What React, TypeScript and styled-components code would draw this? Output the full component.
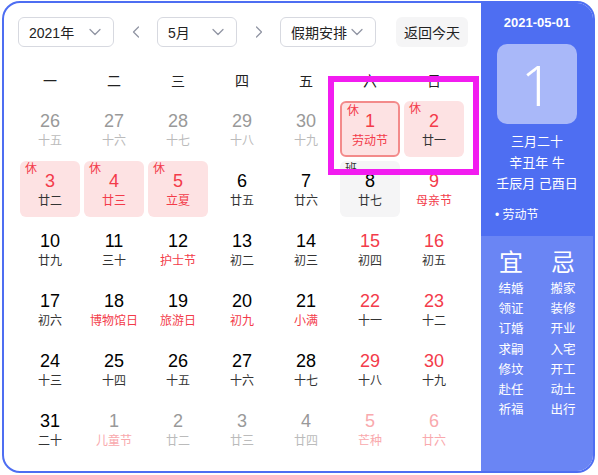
import React from "react";
import styled, { createGlobalStyle } from "styled-components";
import { ChevronDown, ChevronLeft, ChevronRight } from "lucide-react";

const GlobalStyle = createGlobalStyle`
  html, body {
    margin: 0;
    padding: 0;
    background: #fff;
  }
  body {
    font-family: "Liberation Sans", "Noto Sans CJK SC", sans-serif;
  }
`;

const Page = styled.div`
  position: relative;
  width: 598px;
  height: 475px;
  padding: 1px 0 0 2px;
  box-sizing: border-box;
`;

const Frame = styled.div`
  width: 593px;
  height: 472px;
  box-sizing: border-box;
  border: 2px solid #4e6ef2;
  border-radius: 18px;
  overflow: hidden;
  display: flex;
  background: #fff;
`;

const Main = styled.div`
  width: 477px;
  padding: 14px 0 0 14px;
  box-sizing: border-box;
  display: flex;
  flex-direction: column;
`;

const Toolbar = styled.div`
  display: flex;
  align-items: center;
  height: 30px;
`;

const Select = styled.div<{ $w: number }>`
  width: ${({ $w }) => $w}px;
  height: 30px;
  box-sizing: border-box;
  border: 1px solid #d7d9e0;
  border-radius: 6px;
  display: flex;
  align-items: center;
  justify-content: space-between;
  padding: 0 8px 0 10px;
  font-size: 14px;
  color: #222;
  font-family: "Liberation Sans", "Noto Sans CJK SC", sans-serif;
  svg {
    color: #9195a3;
  }
`;

const Arrow = styled.div`
  width: 43px;
  display: flex;
  justify-content: center;
  color: #9195a3;
`;

const TodayButton = styled.div`
  margin-left: 20px;
  height: 30px;
  padding: 0 8px;
  border-radius: 6px;
  background: #f5f5f6;
  display: flex;
  align-items: center;
  font-size: 14px;
  color: #222;
`;

const Grid = styled.div`
  margin: 18px 0 0 2px;
  display: grid;
  grid-template-columns: repeat(7, 60px);
  column-gap: 4px;
  row-gap: 4px;
`;

const WeekDay = styled.div`
  height: 30px;
  display: flex;
  align-items: center;
  justify-content: center;
  font-size: 14px;
  color: #222;
  margin-bottom: 2px;
`;

const Cell = styled.div<{ $bg?: string; $border?: boolean }>`
  position: relative;
  height: 56px;
  box-sizing: border-box;
  border-radius: 6px;
  background: ${({ $bg }) => $bg || "transparent"};
  border: ${({ $border }) => ($border ? "2px solid #f38a8a" : "none")};
  display: flex;
  flex-direction: column;
  align-items: center;
  padding-top: ${({ $border }) => ($border ? "7px" : "9px")};
`;

const DayNum = styled.div<{ $c: string }>`
  font-size: 18px;
  line-height: 22px;
  color: ${({ $c }) => $c};
`;

const Lunar = styled.div<{ $c: string }>`
  font-size: 12px;
  line-height: 16px;
  margin-top: 1px;
  color: ${({ $c }) => $c};
`;

const Tag = styled.span<{ $c: string }>`
  position: absolute;
  left: 5px;
  top: 1px;
  font-size: 12px;
  line-height: 14px;
  color: ${({ $c }) => $c};
`;

const Side = styled.div`
  flex: 1;
  display: flex;
  flex-direction: column;
  color: #fff;
`;

const SideTop = styled.div`
  background: #4e6ef2;
  display: flex;
  flex-direction: column;
  align-items: center;
  padding: 12px 0 13px;
`;

const DateLine = styled.div`
  font-size: 13px;
  font-weight: bold;
  line-height: 16px;
`;

const BigDay = styled.div`
  margin-top: 13px;
  width: 80px;
  height: 80px;
  border-radius: 10px;
  background: #a9b8f9;
  display: flex;
  align-items: center;
  justify-content: center;
  font-size: 56px;
  font-weight: 300;
  font-family: "Noto Sans", "Liberation Sans", sans-serif;
`;

const LunarLines = styled.div`
  margin-top: 7px;
  text-align: center;
  font-size: 13px;
  line-height: 21px;
`;

const Festival = styled.div`
  align-self: flex-start;
  margin: 13px 0 0 14px;
  font-size: 12px;
  line-height: 16px;
`;

const SideBottom = styled.div`
  flex: 1;
  background: #6a85f4;
  display: flex;
  justify-content: space-around;
  padding: 12px 4px 0;
`;

const YiJiCol = styled.div`
  display: flex;
  flex-direction: column;
  align-items: center;
`;

const YiJiHead = styled.div`
  font-size: 24px;
  line-height: 30px;
  margin-bottom: 1px;
`;

const YiJiItem = styled.div`
  font-size: 12.5px;
  line-height: 20.2px;
`;

const Highlight = styled.div`
  position: absolute;
  left: 328px;
  top: 76px;
  width: 151px;
  height: 99px;
  box-sizing: border-box;
  border: 6px solid #f21cf0;
  pointer-events: none;
`;

const BLACK = "#000";
const DARK = "#333";
const RED = "#f33b4a";
const GREY = "#999";
const LGREY = "#bbb";
const PINK = "#f9a9ad";

type Day = {
  n: number;
  l: string;
  nc?: string;
  lc?: string;
  tag?: "休" | "班";
  sel?: boolean;
};

const days: Day[] = [
  { n: 26, l: "十五", nc: GREY, lc: LGREY },
  { n: 27, l: "十六", nc: GREY, lc: LGREY },
  { n: 28, l: "十七", nc: GREY, lc: LGREY },
  { n: 29, l: "十八", nc: GREY, lc: LGREY },
  { n: 30, l: "十九", nc: GREY, lc: LGREY },
  { n: 1, l: "劳动节", nc: RED, lc: RED, tag: "休", sel: true },
  { n: 2, l: "廿一", nc: RED, tag: "休" },
  { n: 3, l: "廿二", nc: RED, tag: "休" },
  { n: 4, l: "廿三", nc: RED, lc: RED, tag: "休" },
  { n: 5, l: "立夏", nc: RED, lc: RED, tag: "休" },
  { n: 6, l: "廿五" },
  { n: 7, l: "廿六" },
  { n: 8, l: "廿七", tag: "班" },
  { n: 9, l: "母亲节", nc: RED, lc: RED },
  { n: 10, l: "廿九" },
  { n: 11, l: "三十" },
  { n: 12, l: "护士节", lc: RED },
  { n: 13, l: "初二" },
  { n: 14, l: "初三" },
  { n: 15, l: "初四", nc: RED },
  { n: 16, l: "初五", nc: RED },
  { n: 17, l: "初六" },
  { n: 18, l: "博物馆日", lc: RED },
  { n: 19, l: "旅游日", lc: RED },
  { n: 20, l: "初九", lc: RED },
  { n: 21, l: "小满", lc: RED },
  { n: 22, l: "十一", nc: RED },
  { n: 23, l: "十二", nc: RED },
  { n: 24, l: "十三" },
  { n: 25, l: "十四" },
  { n: 26, l: "十五" },
  { n: 27, l: "十六" },
  { n: 28, l: "十七" },
  { n: 29, l: "十八", nc: RED },
  { n: 30, l: "十九", nc: RED },
  { n: 31, l: "二十" },
  { n: 1, l: "儿童节", nc: GREY, lc: PINK },
  { n: 2, l: "廿二", nc: GREY, lc: LGREY },
  { n: 3, l: "廿三", nc: GREY, lc: LGREY },
  { n: 4, l: "廿四", nc: GREY, lc: LGREY },
  { n: 5, l: "芒种", nc: PINK, lc: PINK },
  { n: 6, l: "廿六", nc: PINK, lc: PINK },
];

const weekDays = ["一", "二", "三", "四", "五", "六", "日"];
const yi = ["结婚", "领证", "订婚", "求嗣", "修坟", "赴任", "祈福"];
const ji = ["搬家", "装修", "开业", "入宅", "开工", "动土", "出行"];

export default function App() {
  return (
    <Page>
      <GlobalStyle />
      <Frame>
        <Main>
          <Toolbar>
            <Select $w={96}>
              2021年 <ChevronDown size={20} strokeWidth={1.5} />
            </Select>
            <Arrow>
              <ChevronLeft size={20} strokeWidth={1.5} />
            </Arrow>
            <Select $w={80}>
              5月 <ChevronDown size={20} strokeWidth={1.5} />
            </Select>
            <Arrow>
              <ChevronRight size={20} strokeWidth={1.5} />
            </Arrow>
            <Select $w={96}>
              假期安排 <ChevronDown size={20} strokeWidth={1.5} />
            </Select>
            <TodayButton>返回今天</TodayButton>
          </Toolbar>
          <Grid>
            {weekDays.map((w) => (
              <WeekDay key={w}>{w}</WeekDay>
            ))}
            {days.map((d, i) => (
              <Cell
                key={i}
                $bg={d.tag === "休" ? "#fde2e3" : d.tag === "班" ? "#f5f5f6" : undefined}
                $border={d.sel}
              >
                {d.tag && <Tag $c={d.tag === "休" ? RED : DARK}>{d.tag}</Tag>}
                <DayNum $c={d.nc || BLACK}>{d.n}</DayNum>
                <Lunar $c={d.lc || DARK}>{d.l}</Lunar>
              </Cell>
            ))}
          </Grid>
        </Main>
        <Side>
          <SideTop>
            <DateLine>2021-05-01</DateLine>
            <BigDay>1</BigDay>
            <LunarLines>
              <div>三月二十</div>
              <div>辛丑年 牛</div>
              <div>壬辰月 己酉日</div>
            </LunarLines>
            <Festival>• 劳动节</Festival>
          </SideTop>
          <SideBottom>
            <YiJiCol>
              <YiJiHead>宜</YiJiHead>
              {yi.map((t) => (
                <YiJiItem key={t}>{t}</YiJiItem>
              ))}
            </YiJiCol>
            <YiJiCol>
              <YiJiHead>忌</YiJiHead>
              {ji.map((t) => (
                <YiJiItem key={t}>{t}</YiJiItem>
              ))}
            </YiJiCol>
          </SideBottom>
        </Side>
      </Frame>
      <Highlight />
    </Page>
  );
}
